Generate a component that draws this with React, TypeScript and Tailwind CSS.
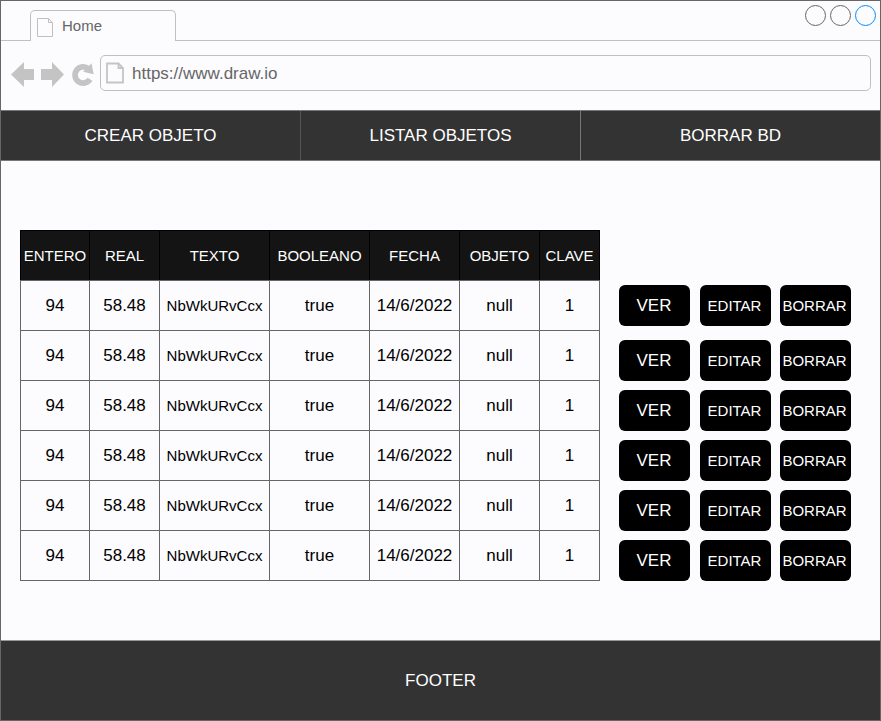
import React from "react";

const columns = [
  { label: "ENTERO", value: "94", width: "w-[69px]", small: false },
  { label: "REAL", value: "58.48", width: "w-[70px]", small: false },
  { label: "TEXTO", value: "NbWkURvCcx", width: "w-[110px]", small: true },
  { label: "BOOLEANO", value: "true", width: "w-[100px]", small: false },
  { label: "FECHA", value: "14/6/2022", width: "w-[90px]", small: false },
  { label: "OBJETO", value: "null", width: "w-[80px]", small: false },
  { label: "CLAVE", value: "1", width: "w-[61px] border-r", small: false },
];

const rows = [0, 1, 2, 3, 4, 5];

function TabPageIcon() {
  return (
    <svg className="mt-[2px] h-[20px] w-[18px]" viewBox="0 0 18 20" fill="none" stroke="#c0c0c0">
      <path d="M1.5 1.5H12.5L16.5 6V19.5H1.5Z" />
      <path d="M12.5 1.5V5.5H16.5" />
    </svg>
  );
}

function UrlPageIcon() {
  return (
    <svg className="h-[22px] w-[20px]" viewBox="0 0 20 22" fill="none" stroke="#c4c4c4" strokeWidth="1.8">
      <path d="M2 1.5H13.5L18 6V20.5H2Z" />
      <path d="M13.5 1.5V6H18" />
    </svg>
  );
}

function Browser() {
  return (
    <header className="h-[109px]">
      <div className="flex h-[40px] items-end">
        <div className="h-px w-[29px] bg-[#c0c0c0]" />
        <div className="flex h-[31px] w-[146px] items-center rounded-t-[5px] border border-b-0 border-[#c0c0c0] pl-[5px]">
          <TabPageIcon />
          <span className="ml-[8px] text-[15px] leading-[18px] text-[#666]">Home</span>
        </div>
        <div className="flex h-full flex-1 items-start justify-end gap-[4px] border-b border-[#c0c0c0] pr-[4px] pt-[4px]">
          <div className="h-[21px] w-[21px] rounded-full border border-[#666]" />
          <div className="h-[21px] w-[21px] rounded-full border border-[#666]" />
          <div className="h-[21px] w-[21px] rounded-full border border-[#008cff]" />
        </div>
      </div>
      <div className="flex pl-[9px] pr-[9px] pt-[14px]">
        <svg className="h-[36px] w-[90px]" viewBox="10 55 90 36" fill="#c4c4c4">
          <path d="M11 74.5L24 62V69H34V80H24V87Z" />
          <path d="M64 74.5L52 62V69H41V80H52V87Z" />
          <path d="M90 79.2A8.1 8.1 0 1 1 88.5 68.9" fill="none" stroke="#c4c4c4" strokeWidth="5.7" />
          <path d="M91.5 63.3L93.7 74.3L83 71.7Z" />
        </svg>
        <div className="flex h-[36px] flex-1 items-center rounded-[5px] border border-[#c0c0c0] pl-[4px]">
          <UrlPageIcon />
          <span className="ml-[7px] mt-[2px] text-[17px] leading-[20px] text-[#666]">https://www.draw.io</span>
        </div>
      </div>
    </header>
  );
}

function Nav() {
  return (
    <nav className="flex h-[51px] border-y border-[#777] bg-[#333] text-[17px] text-white">
      <div className="flex w-[300px] items-center justify-center border-r border-[#555]">CREAR OBJETO</div>
      <div className="flex w-[280px] items-center justify-center border-r border-[#777]">LISTAR OBJETOS</div>
      <div className="flex flex-1 items-center justify-center">BORRAR BD</div>
    </nav>
  );
}

function DataTable() {
  return (
    <div className="w-[580px]">
      <div className="flex h-[50px] border-t border-black bg-[#141414] text-[15px] text-white">
        {columns.map((c) => (
          <div key={c.label} className={`${c.width} flex items-center justify-center border-l border-black pt-[1px]`}>
            {c.label}
          </div>
        ))}
      </div>
      {rows.map((r) => (
        <div key={r} className={`flex border-t border-[#666] ${r === 5 ? "h-[51px] border-b" : "h-[50px]"}`}>
          {columns.map((c) => (
            <div
              key={c.label}
              className={`${c.width} flex items-center justify-center border-l border-[#666] ${c.small ? "pt-[1px] text-[15px]" : "text-[17px]"}`}
            >
              {c.value}
            </div>
          ))}
        </div>
      ))}
    </div>
  );
}

function Actions() {
  return (
    <div className="flex flex-col gap-[9px] pt-[55px]">
      {rows.map((r) => (
        <div key={r} className={`flex h-[41px] text-white ${r === 0 ? "mb-[5px]" : ""}`}>
          <button className="w-[71px] rounded-[6px] bg-black pr-[1px] text-[17px]">VER</button>
          <button className="ml-[10px] w-[71px] rounded-[6px] bg-black pr-[2px] pt-[1px] text-[15px]">EDITAR</button>
          <button className="ml-[9px] w-[71px] rounded-[6px] bg-black pr-[2px] pt-[1px] text-[15px]">BORRAR</button>
        </div>
      ))}
    </div>
  );
}

export default function App() {
  return (
    <div className="flex h-[721px] w-[881px] flex-col border border-[#666] bg-[#fcfcff] font-['Liberation_Sans',Arial,sans-serif] text-black">
      <Browser />
      <Nav />
      <main className="flex flex-1 gap-[19px] pl-[19px] pt-[69px]">
        <DataTable />
        <Actions />
      </main>
      <footer className="flex h-[80px] items-center justify-center border-t border-[#999] bg-[#333] text-[17px] text-white">
        FOOTER
      </footer>
    </div>
  );
}
